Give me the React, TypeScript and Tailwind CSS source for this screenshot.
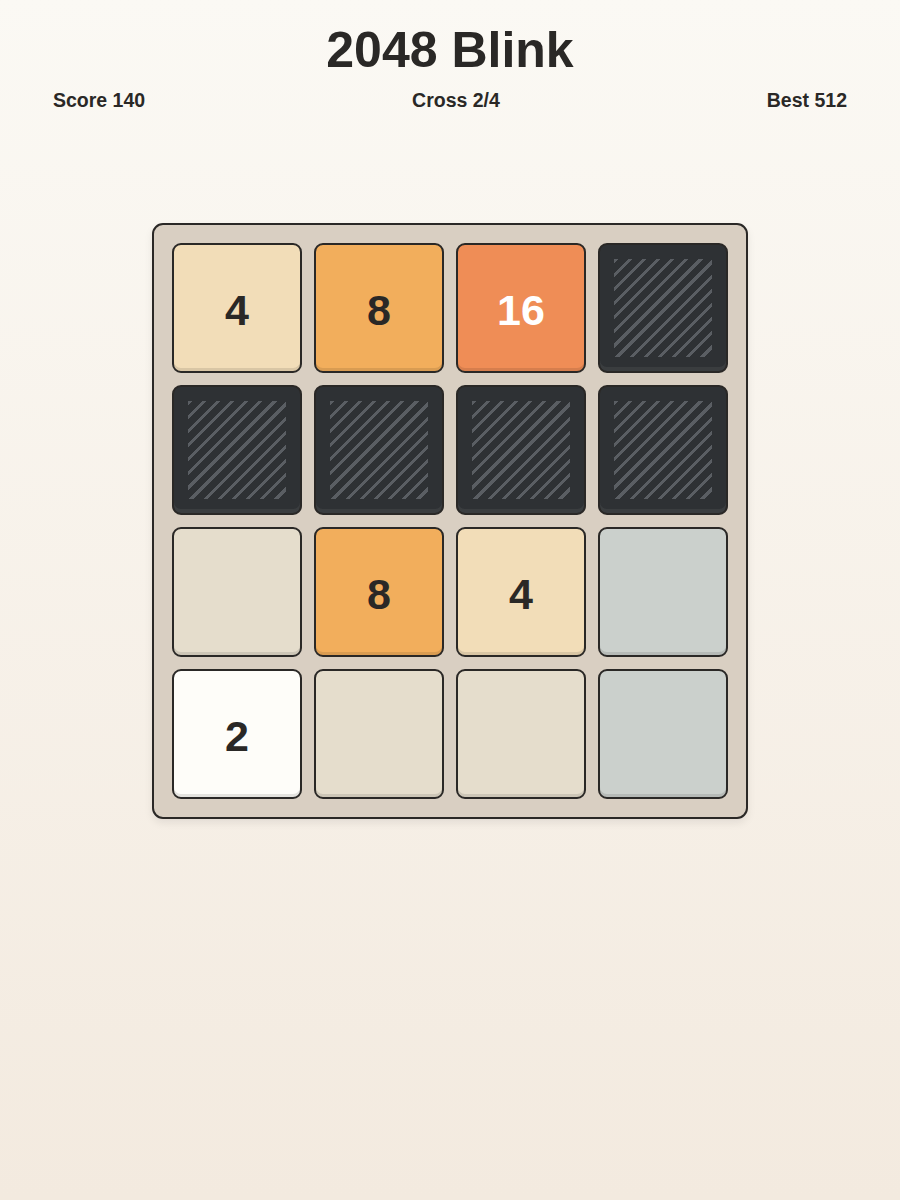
type Cell =
  | { kind: "num"; value: number }
  | { kind: "empty" }
  | { kind: "blank" }
  | { kind: "blocked" };

const board: Cell[] = [
  { kind: "num", value: 4 },
  { kind: "num", value: 8 },
  { kind: "num", value: 16 },
  { kind: "blocked" },
  { kind: "blocked" },
  { kind: "blocked" },
  { kind: "blocked" },
  { kind: "blocked" },
  { kind: "empty" },
  { kind: "num", value: 8 },
  { kind: "num", value: 4 },
  { kind: "blank" },
  { kind: "num", value: 2 },
  { kind: "empty" },
  { kind: "empty" },
  { kind: "blank" },
];

const numStyles: Record<number, string> = {
  2: "bg-[#fefdf9] text-[#2a2826]",
  4: "bg-[#f2ddb8] text-[#2a2826]",
  8: "bg-[#f2ae5c] text-[#2a2826]",
  16: "bg-[#ef8d56] text-white",
};

function Tile({ cell }: { cell: Cell }) {
  const base =
    "h-[130px] w-[130px] rounded-[9px] border-2 border-[#2a2826] flex items-center justify-center shadow-[inset_0_-3px_0_rgba(0,0,0,0.1)]";

  if (cell.kind === "blocked") {
    return (
      <div className={`${base} bg-[#2e3134] shadow-[inset_0_-4px_0_rgba(255,255,255,0.06)]`}>
        <div className="h-[98px] w-[98px] bg-[repeating-linear-gradient(135deg,#5a5e63_0_3px,transparent_3px_10px)]" />
      </div>
    );
  }
  if (cell.kind === "empty") {
    return <div className={`${base} bg-[#e5ddcc]`} />;
  }
  if (cell.kind === "blank") {
    return <div className={`${base} bg-[#cbd0cc]`} />;
  }
  return (
    <div className={`${base} ${numStyles[cell.value]}`}>
      <span className="text-[43px] font-bold leading-none pt-[4px]">{cell.value}</span>
    </div>
  );
}

export default function App() {
  return (
    <div className="min-h-[1200px] w-full bg-gradient-to-b from-[#fbf9f4] to-[#f3eadf] font-['Liberation_Sans',Arial,sans-serif] text-[#2a2826]">
      <header className="pt-[20px] px-[53px]">
        <h1 className="text-center text-[50px] font-bold leading-[60px]">2048 Blink</h1>
        <div className="mt-[8px] flex items-center justify-between text-[19.5px] font-bold leading-[24px]">
          <span>Score 140</span>
          <span>Cross 2/4</span>
          <span>Best 512</span>
        </div>
      </header>

      <div className="mt-[111px] flex justify-center">
        <div className="rounded-[11px] border-2 border-[#2a2826] bg-[#d9cfc2] p-[18px] shadow-[0_4px_8px_rgba(0,0,0,0.08)]">
          <div className="grid grid-cols-4 gap-[12px]">
            {board.map((cell, i) => (
              <Tile key={i} cell={cell} />
            ))}
          </div>
        </div>
      </div>
    </div>
  );
}
